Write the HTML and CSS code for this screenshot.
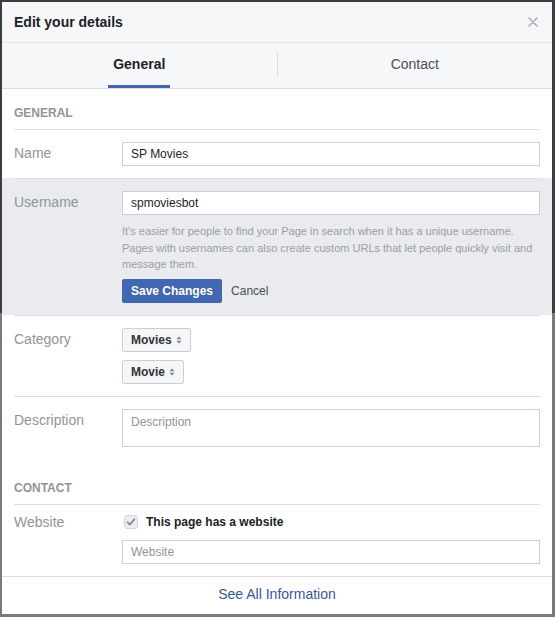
FILE: index.html
```html
<!DOCTYPE html>
<html lang="en">
<head>
<meta charset="utf-8">
<title>Edit your details</title>
<link rel="stylesheet" href="styles.css">
</head>
<body>
<div class="dialog">
  <div class="header">
    <span class="title">Edit your details</span>
    <svg class="close" width="10" height="10" viewBox="0 0 10 10" aria-label="Close"><path d="M1 1L9 9M9 1L1 9" stroke="#a7aab0" stroke-width="1.5" stroke-linecap="round"/></svg>
  </div>
  <div class="tabs">
    <div class="tab"><span class="tab-label active">General</span></div>
    <div class="tab-divider"></div>
    <div class="tab"><span class="tab-label">Contact</span></div>
  </div>
  <div class="content">
    <div class="section-heading">General</div>
    <div class="row">
      <div class="label">Name</div>
      <div class="field"><input class="input" type="text" value="SP Movies"></div>
    </div>
    <div class="band">
      <div class="row sep">
        <div class="label">Username</div>
        <div class="field">
          <input class="input" type="text" value="spmoviesbot">
          <p class="help">It's easier for people to find your Page in search when it has a unique username. Pages with usernames can also create custom URLs that let people quickly visit and message them.</p>
          <div class="actions">
            <button class="btn-primary" type="button">Save Changes</button>
            <button class="btn-link" type="button">Cancel</button>
          </div>
        </div>
      </div>
    </div>
    <div class="row sep">
      <div class="label">Category</div>
      <div class="field stack">
        <div class="select">Movies <svg class="arrows" width="6" height="8" viewBox="0 0 6 8"><path d="M3 0.5L5.6 3.3H0.4Z M3 7.5L5.6 4.7H0.4Z" fill="#7f8389"/></svg></div>
        <div class="select">Movie <svg class="arrows" width="6" height="8" viewBox="0 0 6 8"><path d="M3 0.5L5.6 3.3H0.4Z M3 7.5L5.6 4.7H0.4Z" fill="#7f8389"/></svg></div>
      </div>
    </div>
    <div class="row sep">
      <div class="label">Description</div>
      <div class="field"><textarea class="textarea" placeholder="Description"></textarea></div>
    </div>
    <div class="section-heading spaced">Contact</div>
    <div class="row tight">
      <div class="label">Website</div>
      <div class="field">
        <label class="check-line">
          <svg class="checkbox" width="14" height="14" viewBox="0 0 14 14"><rect x="0.5" y="0.5" width="13" height="13" rx="2.5" fill="#ebedf0" stroke="#d3d6db"/><path d="M3.6 7.2L5.9 9.6L10.4 4.2" fill="none" stroke="#7d8187" stroke-width="1.6" stroke-linecap="round" stroke-linejoin="round"/></svg>
          <span class="check-text">This page has a website</span>
        </label>
        <input class="input" type="text" placeholder="Website">
      </div>
    </div>
  </div>
  <div class="footer"><a class="footer-link" href="#">See All Information</a></div>
</div>
</body>
</html>
```
FILE: styles.css
```css
* { box-sizing: border-box; }
html, body { margin: 0; }
body {
  width: 555px;
  height: 617px;
  overflow: hidden;
  padding: 2px 3px 3px 2px;
  background: linear-gradient(#3b3c40 0, #3b3c40 313px, #7a7a7a 313px);
  font-family: "Liberation Sans", Arial, Helvetica, sans-serif;
}
.dialog {
  width: 550px;
  height: 612px;
  background: #fff;
  display: flex;
  flex-direction: column;
}
.header {
  height: 41px;
  flex: none;
  background: #f6f7f9;
  border-bottom: 1px solid #e5e5e5;
  display: flex;
  align-items: center;
  justify-content: space-between;
  padding: 0 14px 0 12px;
}
.title {
  font-size: 14px;
  font-weight: bold;
  color: #1d2129;
}
.close { display: block; }
.tabs {
  height: 46px;
  flex: none;
  background: #f6f7f9;
  border-bottom: 1px solid #dddfe2;
  display: flex;
}
.tab {
  flex: 1;
  display: flex;
  justify-content: center;
}
.tab-label {
  display: block;
  height: 45px;
  line-height: 42px;
  padding: 0 5px;
  font-size: 14px;
  color: #4b4f56;
  border-bottom: 3px solid transparent;
}
.tab-label.active {
  font-weight: bold;
  color: #1d2129;
  border-bottom-color: #4267b2;
}
.tab-divider {
  width: 1px;
  height: 25px;
  align-self: center;
  margin-top: -2px;
  background: #dddfe2;
}
.content { flex: 1; }
.section-heading {
  margin: 0 12px;
  padding: 16px 0 8px;
  line-height: 16px;
  font-size: 12px;
  font-weight: bold;
  color: #90949c;
  text-transform: uppercase;
  border-bottom: 1px solid #dddfe2;
}
.section-heading.spaced { padding-top: 21px; }
.row {
  margin: 0 12px;
  padding: 12px 0;
  display: flex;
}
.row.sep { border-top: 1px solid #dddfe2; }
.row.tight { padding: 6px 0 12px; }
.band { background: #e9ebee; }
.label {
  width: 108px;
  flex: none;
  font-size: 14px;
  line-height: 22px;
  color: #90949c;
}
.field {
  flex: 1;
  display: flex;
  flex-direction: column;
  align-items: stretch;
}
.field.stack {
  align-items: flex-start;
  gap: 8px;
}
.input {
  display: block;
  width: 100%;
  height: 24px;
  margin: 0;
  padding: 0 8px;
  border: 1px solid #ccd0d5;
  border-radius: 0;
  background: #fff;
  font-family: "Liberation Sans", Arial, sans-serif;
  font-size: 12px;
  color: #1d2129;
  outline: none;
}
.input::placeholder, .textarea::placeholder { color: #90949c; opacity: 1; }
.textarea {
  display: block;
  width: 100%;
  height: 38px;
  margin: 0;
  padding: 4px 8px;
  border: 1px solid #ccd0d5;
  resize: none;
  font-family: "Liberation Sans", Arial, sans-serif;
  font-size: 12px;
  line-height: 16px;
  color: #1d2129;
  outline: none;
}
.help {
  margin: 8px 0 0;
  font-size: 11px;
  line-height: 16.5px;
  color: #9a9ea5;
}
.actions {
  margin-top: 6.5px;
  display: flex;
  align-items: center;
  gap: 9px;
}
.btn-primary {
  height: 24px;
  margin: 0;
  padding: 0 8px;
  background: #4267b2;
  border: 1px solid #4267b2;
  border-radius: 2px;
  color: #fff;
  font-family: "Liberation Sans", Arial, sans-serif;
  font-size: 12px;
  font-weight: bold;
}
.btn-link {
  margin: 0;
  padding: 0;
  background: none;
  border: 0;
  font-family: "Liberation Sans", Arial, sans-serif;
  font-size: 12px;
  color: #4b4f56;
}
.select {
  height: 24px;
  padding: 0 8px;
  display: flex;
  align-items: center;
  gap: 4px;
  background: #f5f6f7;
  border: 1px solid #ccd0d5;
  border-radius: 2px;
  font-size: 12px;
  font-weight: bold;
  color: #303338;
}
.arrows { display: block; }
.check-line {
  height: 22px;
  display: flex;
  align-items: center;
  gap: 8px;
  padding-left: 2px;
  margin-bottom: 7px;
}
.checkbox { display: block; }
.check-text {
  font-size: 12px;
  font-weight: bold;
  color: #1d2129;
}
.footer {
  height: 38px;
  flex: none;
  border-top: 1px solid #dddfe2;
  text-align: center;
  line-height: 33px;
}
.footer-link {
  font-size: 14px;
  color: #365899;
  text-decoration: none;
}
```
